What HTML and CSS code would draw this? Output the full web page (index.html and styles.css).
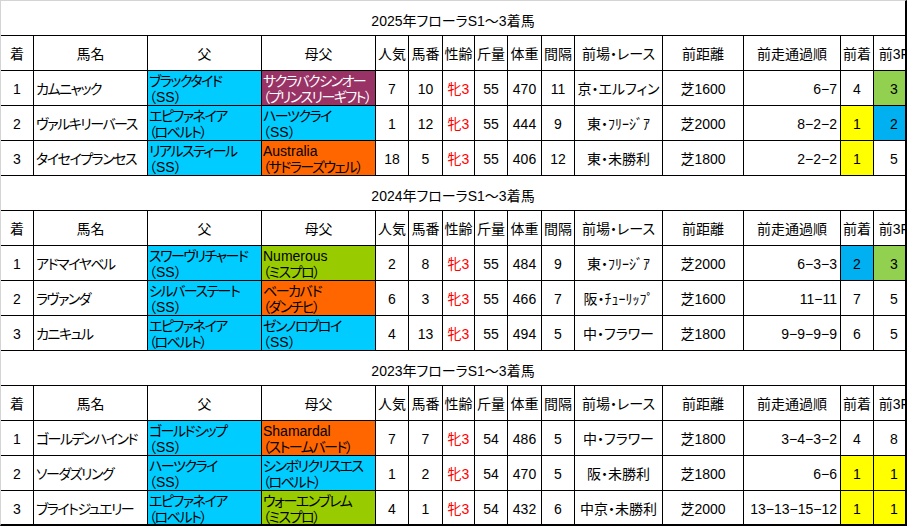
FILE: index.html
```html
<!DOCTYPE html>
<html lang="ja">
<head>
<meta charset="utf-8">
<title>フローラS1～3着馬</title>
<link rel="stylesheet" href="styles.css">
</head>
<body>
<div class="frame">

  <section class="sec">
    <div class="title">2025年フローラS1～3着馬</div>
    <div class="grid">
      <div class="c">着</div><div class="c">馬名</div><div class="c">父</div><div class="c">母父</div><div class="c">人気</div><div class="c">馬番</div><div class="c">性齢</div><div class="c">斤量</div><div class="c">体重</div><div class="c">間隔</div><div class="c">前場・レース</div><div class="c">前距離</div><div class="c">前走通過順</div><div class="c">前着</div><div class="c">前3F</div>

      <div class="c">1</div><div class="c l">カムニャック</div><div class="c two cy"><span class="k">ブラックタイド</span><span>（SS）</span></div><div class="c two pu"><span class="k">サクラバクシンオー</span><span class="k">（プリンスリーギフト）</span></div><div class="c">7</div><div class="c">10</div><div class="c red">牝3</div><div class="c">55</div><div class="c">470</div><div class="c">11</div><div class="c">京・エルフィン</div><div class="c">芝1600</div><div class="c r">6−7</div><div class="c">4</div><div class="c gr">3</div>

      <div class="c">2</div><div class="c l">ヴァルキリーバース</div><div class="c two cy"><span class="k">エピファネイア</span><span class="k">（ロベルト）</span></div><div class="c two cy"><span class="k">ハーツクライ</span><span>（SS）</span></div><div class="c">1</div><div class="c">12</div><div class="c red">牝3</div><div class="c">55</div><div class="c">444</div><div class="c">9</div><div class="c">東・ﾌﾘｰｼﾞｱ</div><div class="c">芝2000</div><div class="c r">8−2−2</div><div class="c ye">1</div><div class="c bl">2</div>

      <div class="c">3</div><div class="c l">タイセイプランセス</div><div class="c two cy"><span class="k">リアルスティール</span><span>（SS）</span></div><div class="c two or"><span>Australia</span><span class="k">（サドラーズウェル）</span></div><div class="c">18</div><div class="c">5</div><div class="c red">牝3</div><div class="c">55</div><div class="c">406</div><div class="c">12</div><div class="c">東・未勝利</div><div class="c">芝1800</div><div class="c r">2−2−2</div><div class="c ye">1</div><div class="c">5</div>
    </div>
  </section>

  <section class="sec">
    <div class="title">2024年フローラS1～3着馬</div>
    <div class="grid">
      <div class="c">着</div><div class="c">馬名</div><div class="c">父</div><div class="c">母父</div><div class="c">人気</div><div class="c">馬番</div><div class="c">性齢</div><div class="c">斤量</div><div class="c">体重</div><div class="c">間隔</div><div class="c">前場・レース</div><div class="c">前距離</div><div class="c">前走通過順</div><div class="c">前着</div><div class="c">前3F</div>

      <div class="c">1</div><div class="c l">アドマイヤベル</div><div class="c two cy"><span class="k">スワーヴリチャード</span><span>（SS）</span></div><div class="c two yg"><span>Numerous</span><span class="k">（ミスプロ）</span></div><div class="c">2</div><div class="c">8</div><div class="c red">牝3</div><div class="c">55</div><div class="c">484</div><div class="c">9</div><div class="c">東・ﾌﾘｰｼﾞｱ</div><div class="c">芝2000</div><div class="c r">6−3−3</div><div class="c bl">2</div><div class="c gr">3</div>

      <div class="c">2</div><div class="c l">ラヴァンダ</div><div class="c two cy"><span class="k">シルバーステート</span><span>（SS）</span></div><div class="c two or"><span class="k">ベーカバド</span><span class="k">（ダンチヒ）</span></div><div class="c">6</div><div class="c">3</div><div class="c red">牝3</div><div class="c">55</div><div class="c">466</div><div class="c">7</div><div class="c">阪・ﾁｭｰﾘｯﾌﾟ</div><div class="c">芝1600</div><div class="c r">11−11</div><div class="c">7</div><div class="c">5</div>

      <div class="c">3</div><div class="c l">カニキュル</div><div class="c two cy"><span class="k">エピファネイア</span><span class="k">（ロベルト）</span></div><div class="c two cy"><span class="k">ゼンノロブロイ</span><span>（SS）</span></div><div class="c">4</div><div class="c">13</div><div class="c red">牝3</div><div class="c">55</div><div class="c">494</div><div class="c">5</div><div class="c">中・フラワー</div><div class="c">芝1800</div><div class="c r">9−9−9−9</div><div class="c">6</div><div class="c">5</div>
    </div>
  </section>

  <section class="sec">
    <div class="title">2023年フローラS1～3着馬</div>
    <div class="grid">
      <div class="c">着</div><div class="c">馬名</div><div class="c">父</div><div class="c">母父</div><div class="c">人気</div><div class="c">馬番</div><div class="c">性齢</div><div class="c">斤量</div><div class="c">体重</div><div class="c">間隔</div><div class="c">前場・レース</div><div class="c">前距離</div><div class="c">前走通過順</div><div class="c">前着</div><div class="c">前3F</div>

      <div class="c">1</div><div class="c l">ゴールデンハインド</div><div class="c two cy"><span class="k">ゴールドシップ</span><span>（SS）</span></div><div class="c two or"><span>Shamardal</span><span class="k">（ストームバード）</span></div><div class="c">7</div><div class="c">7</div><div class="c red">牝3</div><div class="c">54</div><div class="c">486</div><div class="c">5</div><div class="c">中・フラワー</div><div class="c">芝1800</div><div class="c r">3−4−3−2</div><div class="c">4</div><div class="c">8</div>

      <div class="c">2</div><div class="c l">ソーダズリング</div><div class="c two cy"><span class="k">ハーツクライ</span><span>（SS）</span></div><div class="c two cy"><span class="k">シンボリクリスエス</span><span class="k">（ロベルト）</span></div><div class="c">1</div><div class="c">2</div><div class="c red">牝3</div><div class="c">54</div><div class="c">470</div><div class="c">5</div><div class="c">阪・未勝利</div><div class="c">芝1800</div><div class="c r">6−6</div><div class="c ye">1</div><div class="c ye">1</div>

      <div class="c">3</div><div class="c l">ブライトジュエリー</div><div class="c two cy"><span class="k">エピファネイア</span><span class="k">（ロベルト）</span></div><div class="c two yg"><span class="k">ウォーエンブレム</span><span class="k">（ミスプロ）</span></div><div class="c">4</div><div class="c">1</div><div class="c red">牝3</div><div class="c">54</div><div class="c">432</div><div class="c">6</div><div class="c">中京・未勝利</div><div class="c">芝2000</div><div class="c r">13−13−15−12</div><div class="c ye">1</div><div class="c ye">1</div>
    </div>
  </section>

</div>
</body>
</html>
```

FILE: styles.css
```css
html, body {
  margin: 0;
  padding: 0;
  background: #ffffff;
}

body {
  font-family: "Liberation Sans", "Noto Sans CJK JP", sans-serif;
  font-size: 14px;
  color: #000000;
  font-feature-settings: "palt" 1;
}

.frame {
  width: 907px;
  height: 526px;
  box-sizing: border-box;
  border-top: 1px solid #d4d4d4;
  border-left: 1px solid #d4d4d4;
  border-right: 2px solid #000000;
  border-bottom: 2px solid #000000;
  overflow: hidden;
  background: #ffffff;
}

.title {
  height: 34px;
  box-sizing: border-box;
  padding-top: 3px;
  display: flex;
  align-items: center;
  justify-content: center;
  white-space: nowrap;
}

.grid {
  display: grid;
  grid-template-columns: 33px 114px 114px 114px 33px 34px 32px 33px 34px 33px 88px 81px 97px 33px 41px;
  grid-auto-rows: 35px;
  width: 914px;
  border-top: 1px solid #000000;
}

.c {
  box-sizing: border-box;
  border-right: 1px solid #000000;
  border-bottom: 1px solid #000000;
  display: flex;
  align-items: center;
  justify-content: center;
  padding-top: 2px;
  white-space: nowrap;
  overflow: hidden;
  line-height: 16px;
}

.l {
  justify-content: flex-start;
  padding-left: 2px;
  letter-spacing: -1.5px;
}

.r {
  justify-content: flex-end;
  padding-right: 3px;
}

.two {
  flex-direction: column;
  align-items: flex-start;
  justify-content: center;
  padding-left: 1px;
}

.two span {
  display: block;
  line-height: 16px;
}

.two .k {
  letter-spacing: -1.5px;
}

.red { color: #ff0000; }
.cy { background: #00ccff; }
.pu { background: #993366; color: #ffffff; }
.or { background: #ff6600; }
.yg { background: #99cc00; }
.ye { background: #ffff00; }
.bl { background: #00b0f0; }
.gr { background: #92d050; }
```
